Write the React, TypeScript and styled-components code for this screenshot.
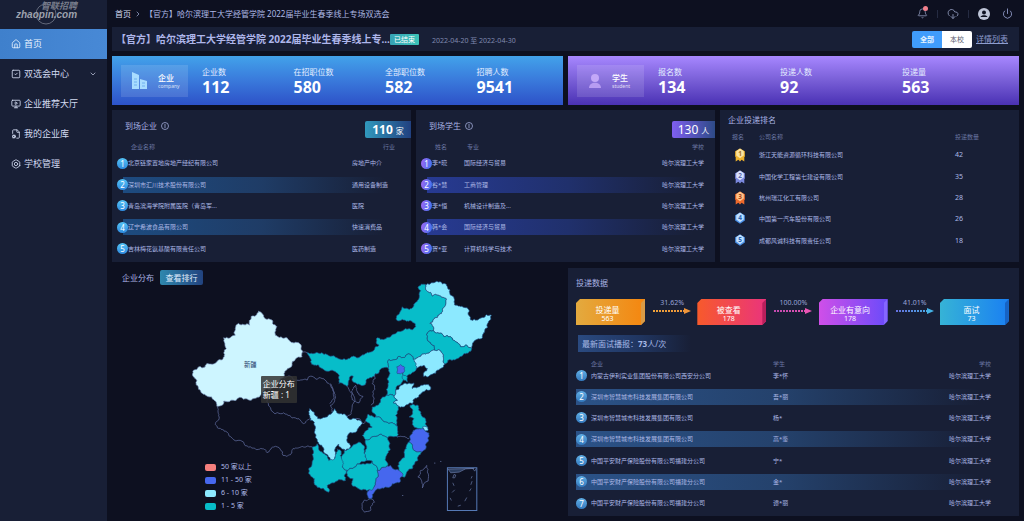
import React from 'react';
import styled, { createGlobalStyle, css } from 'styled-components';
import { Bell, Bolt, ChevronDown, ChevronRight, CloudDownload, Power, House, SquareCheck, MonitorPlay, FileCog } from 'lucide-react';

const color = {
  page: '#0d1020',
  panel: '#181f36',
  text: '#adb9e6',
  muted: '#6a76a2',
  heading: '#a9b3e3',
};

const Global = createGlobalStyle`
  *, *::before, *::after { box-sizing: border-box; }
  body {
    margin: 0;
    background: ${color.page};
    color: ${color.text};
    font-family: "Noto Sans", "Noto Sans CJK SC", sans-serif;
    font-size: 6px;
    line-height: 10px;
  }
  h1, h2, p, ul, dl, dd { margin: 0; padding: 0; }
  ul { list-style: none; }
  button { font-family: inherit; border: 0; cursor: pointer; }
  a { color: inherit; text-decoration: none; }
`;

const Shell = styled.div`
  display: grid;
  grid-template-columns: 107px minmax(0, 1fr);
  min-height: 100vh;
`;

/* ---------- side navigation ---------- */

const Sidebar = styled.aside`
  background: ${color.panel};
`;

const Logo = styled.a`
  display: block;
  height: 29px;
  padding-left: 14px;
  svg { display: block; }
`;

const NavLink = styled.a<{ $active?: boolean }>`
  display: flex;
  align-items: center;
  gap: 3px;
  height: 30px;
  padding: 0 10px 0 11px;
  font-size: 9px;
  line-height: 14px;
  color: ${(p) => (p.$active ? '#eaf4ff' : '#d3dbf1')};
  background: ${(p) => (p.$active ? 'linear-gradient(90deg, #3f80cc, #4889d6)' : 'none')};
  svg { flex: none; }
  svg:nth-of-type(2) { margin-left: auto; }
`;

/* ---------- top of the page ---------- */

const Main = styled.main`
  display: flex;
  flex-direction: column;
  padding: 0 5px;
`;

const TopBar = styled.header`
  display: flex;
  align-items: center;
  justify-content: space-between;
  height: 27px;
  padding: 0 6px 0 3px;
`;

const Crumbs = styled.nav`
  display: flex;
  align-items: center;
  gap: 3px;
  font-size: 8px;
  line-height: 12px;
  a { color: #d6ddf2; }
`;

const Tools = styled.div`
  display: flex;
  align-items: center;
`;

const ToolButton = styled.button`
  position: relative;
  display: flex;
  align-items: center;
  justify-content: center;
  width: 12px;
  height: 16px;
  padding: 0;
  background: none;
  color: #7f88a8;
`;

const RedDot = styled.span`
  position: absolute;
  top: 0;
  right: 0;
  width: 5px;
  height: 5px;
  border-radius: 50%;
  background: #f2808c;
`;

const Divider = styled.span`
  width: 1px;
  height: 8px;
  margin: 0 9px;
  background: #252b42;
`;

const Spacer = styled.span`
  width: 11px;
`;

const TitleBar = styled.section`
  display: flex;
  align-items: center;
  height: 24px;
  padding: 0 11px 0 4px;
  background: ${color.panel};
`;

const PageTitle = styled.h1`
  font-size: 10px;
  line-height: 16px;
  font-weight: 700;
  color: #aeb6ea;
`;

const Status = styled.span`
  padding: 0 4px;
  border-radius: 1px;
  font-size: 7px;
  line-height: 11px;
  color: #fff;
  background: linear-gradient(90deg, #36a3b5, #3cc4b9);
`;

const DateRange = styled.span`
  margin-left: 13px;
  padding-top: 3px;
  font-size: 7px;
  color: #8089ae;
`;

const Segment = styled.div`
  display: flex;
  margin-left: auto;
  border-radius: 2px;
  overflow: hidden;
`;

const SegmentButton = styled.button<{ $on?: boolean }>`
  width: 30px;
  height: 17px;
  padding: 0;
  font-size: 7px;
  line-height: 17px;
  font-weight: ${(p) => (p.$on ? 700 : 400)};
  color: ${(p) => (p.$on ? '#e6f3ff' : '#5b6070')};
  background: ${(p) => (p.$on ? '#409cfb' : '#fff')};
`;

const DetailLink = styled.a`
  margin-left: 4px;
  font-size: 8px;
  line-height: 12px;
  text-decoration: underline;
  color: #8e9dcf;
`;

/* ---------- summary cards ---------- */

const Summary = styled.div`
  display: grid;
  grid-template-columns: 1fr 1fr;
  gap: 5px;
  margin: 5px 0;
`;

const SummaryCard = styled.section<{ $tone: 'blue' | 'violet' }>`
  display: flex;
  align-items: center;
  height: 49px;
  padding-left: 9px;
  background: ${(p) =>
    p.$tone === 'blue'
      ? 'linear-gradient(180deg, #42a2ea 0%, #3a7bdc 48%, #2d52c8 100%)'
      : 'linear-gradient(180deg, #a787ff 0%, #7a60d8 48%, #4a31b4 100%)'};
`;

const Kind = styled.div`
  display: flex;
  align-items: center;
  gap: 8px;
  width: 67px;
  height: 32px;
  padding-left: 9px;
  background: rgba(255, 255, 255, 0.12);
  color: #fff;
  h2 { font-size: 8px; line-height: 10px; font-weight: 500; }
  p { font-size: 5px; line-height: 6px; opacity: 0.75; }
`;

const Figures = styled.dl<{ $count: number }>`
  flex: 1;
  display: grid;
  grid-template-columns: repeat(${(p) => p.$count}, 1fr);
  margin: 2px 0 0 9px;
  color: #fff;
  div { padding-left: 5px; }
  dt { font-size: 8px; line-height: 12px; color: #e4eeff; }
  dd { font-size: 16px; line-height: 19px; font-weight: 700; }
`;

/* ---------- panels and tables ---------- */

const Columns = styled.div`
  display: grid;
  grid-template-columns: repeat(3, 1fr);
  gap: 5px;
  margin-bottom: 6px;
`;

const Panel = styled.section`
  position: relative;
  background: ${color.panel};
`;

const PanelHead = styled.div`
  display: flex;
  align-items: center;
  height: 31px;
  padding-left: 13px;
`;

const PanelTitle = styled.h2`
  display: flex;
  align-items: center;
  gap: 4px;
  font-size: 8px;
  line-height: 12px;
  font-weight: 400;
  color: ${color.heading};
`;

const Tally = styled.div<{ $tone: 'blue' | 'violet' }>`
  display: flex;
  align-items: baseline;
  justify-content: center;
  gap: 3px;
  margin: 7px 0 0 auto;
  height: 17px;
  border-radius: 2px 0 0 2px;
  color: #fff;
  font-size: 8px;
  line-height: 17px;
  ${(p) =>
    p.$tone === 'blue'
      ? css`
          width: 46px;
          background: linear-gradient(90deg, #3199bd, #21407f);
        `
      : css`
          width: 43px;
          background: linear-gradient(90deg, #7f5ff0, #2d4a86);
        `}
  strong { font-size: 12px; font-weight: ${(p) => (p.$tone === 'blue' ? 700 : 400)}; }
`;

const Clip = styled.div`
  height: 121px;
  overflow: hidden;
`;

type Tone = 'blue' | 'violet' | 'sky' | 'plain';

const stripe: Record<Tone, string> = {
  blue: 'linear-gradient(90deg, #1d4b80, #1f3c66 50%, #181f36 94%)',
  violet: 'linear-gradient(90deg, #273a92, #20306c 50%, #181f36 94%)',
  sky: 'linear-gradient(90deg, #2b5287, #24416b 50%, #181f36 97%)',
  plain: 'none',
};

const Grid = styled.table<{ $tone: Tone; $inset?: number }>`
  width: 100%;
  table-layout: fixed;
  border-collapse: collapse;
  th, td { padding: 0; text-align: left; font-weight: 400; white-space: nowrap; }
  th { color: ${color.muted}; }
  thead tr { height: 11px; }
  tbody tr { height: 21px; }
  tbody tr:nth-child(3n + 1) { height: 22px; }
  tbody tr:nth-child(even) {
    background: ${(p) => stripe[p.$tone]} ${(p) => p.$inset ?? 0}px center / 100% 16px no-repeat;
  }
`;

const Col = styled.col<{ $w?: number }>`
  ${(p) => p.$w && `width: ${p.$w}px;`}
`;

const RightTh = styled.th`
  && { text-align: right; }
`;

const RightTd = styled.td`
  && { text-align: right; }
`;

const IndentTh = styled.th`
  && { padding-left: 3px; }
`;

const Rank = styled.span<{ $tone: Tone }>`
  display: block;
  width: 11px;
  height: 11px;
  border-radius: 50%;
  text-align: center;
  font-size: 8px;
  line-height: 11px;
  color: #fff;
  background: ${(p) =>
    p.$tone === 'violet'
      ? 'linear-gradient(100deg, #a066f2, #3d74f0)'
      : p.$tone === 'blue'
        ? 'linear-gradient(180deg, #55c4f6, #2f8be0)'
        : 'linear-gradient(180deg, #62b0e6, #3378bd)'};
`;

const TableArea = styled.div<{ $left: number; $right: number }>`
  padding: 0 ${(p) => p.$right}px 0 ${(p) => p.$left}px;
`;

const RankingHead = styled.div`
  height: 20px;
  padding: 4px 0 0 8px;
`;

const RankingGrid = styled(Grid)`
  thead tr { height: 14px; }
  td:last-child { font-size: 7px; }
  td svg { display: block; margin-left: 2px; }
`;

const InterviewGrid = styled(Grid)`
  thead tr { height: 10px; }
  tbody tr:first-child { height: 17px; }
  tbody tr:first-child td { padding-bottom: 4px; }
`;

/* ---------- map ---------- */

const Lower = styled.div`
  display: grid;
  grid-template-columns: minmax(0, 1fr) minmax(0, 1fr);
  gap: 5px;
`;

const MapPanel = styled.section`
  position: relative;
  display: grid;
  > * { grid-area: 1 / 1; }
`;

const MapHead = styled.div`
  display: flex;
  align-items: center;
  align-self: start;
  gap: 6px;
  padding: 2px 0 0 10px;
`;

const RankButton = styled.button`
  width: 43px;
  height: 15px;
  padding: 0;
  border-radius: 2px;
  font-size: 8px;
  line-height: 15px;
  color: #e2efff;
  background: linear-gradient(90deg, #2f88ae, #22437f);
`;

const MapDrawing = styled.svg`
  width: 100%;
  height: 100%;
`;

const Legend = styled.ul`
  align-self: end;
  justify-self: start;
  padding: 0 0 3px 93px;
  li { display: flex; align-items: center; gap: 5px; height: 13px; font-size: 7px; }
`;

const Swatch = styled.span<{ $fill: string }>`
  width: 11px;
  height: 7px;
  border-radius: 2px;
  background: ${(p) => p.$fill};
`;

const Tooltip = styled.div`
  position: absolute;
  left: 33%;
  top: 108px;
  padding: 2px 2px 3px;
  border-radius: 1px;
  font-size: 8px;
  line-height: 11px;
  color: #fff;
  background: rgba(50, 50, 50, 0.85);
  white-space: nowrap;
`;

/* ---------- delivery funnel ---------- */

const DeliveryPanel = styled(Panel)`
  padding: 9px 9px 0 8px;
`;

const Funnel = styled.div`
  display: flex;
  justify-content: space-between;
  margin-top: 10px;
  padding-right: 1px;
`;

const Stage = styled.div<{ $from: string; $to: string; $side: string }>`
  position: relative;
  width: 69px;
  height: 26px;
  padding: 5px 6px 0 0;
  text-align: center;
  color: #fff;
  font-size: 8px;
  line-height: 11px;
  clip-path: polygon(4px 0, 100% 0, 100% 22px, 65px 100%, 0 100%, 0 4px);
  background: linear-gradient(90deg, ${(p) => p.$from}, ${(p) => p.$to});
  p + p { font-size: 7px; line-height: 7px; }
  &::after {
    content: '';
    position: absolute;
    inset: 0 0 0 auto;
    width: 4px;
    background: ${(p) => p.$side};
    clip-path: polygon(0 4px, 100% 0, 100% 100%, 0 100%);
  }
`;

const Step = styled.div`
  width: 40px;
  padding-left: 2px;
  text-align: center;
  font-size: 7px;
  line-height: 8px;
  color: #98a3d6;
  svg { display: block; }
`;

const Broadcast = styled.p`
  width: 113px;
  height: 17px;
  margin: 10px 0 7px 2px;
  padding-left: 4px;
  font-size: 8px;
  line-height: 17px;
  color: #a6b8e6;
  background: linear-gradient(90deg, #2a4a80, #203560 55%, #181f36);
`;

const NextRow = styled.div`
  flex: 1;
  display: grid;
  grid-template-columns: 2fr 1fr;
  gap: 5px;
  margin-top: 5px;
`;

/* ---------- data ---------- */

const companies = [
  ['北京链家置地房地产经纪有限公司', '房地产中介'],
  ['深圳市汇川技术股份有限公司', '通用设备制造'],
  ['青岛滨海学院附属医院（青岛军...', '医院'],
  ['辽宁希波食品有限公司', '快速消费品'],
  ['吉林梅花氨基酸有限责任公司', '医药制造'],
];

const students = [
  ['李*晓', '国际经济与贸易'],
  ['谷*慧', '工商管理'],
  ['李*恒', '机械设计制造及...'],
  ['韩*会', '国际经济与贸易'],
  ['贺*亚', '计算机科学与技术'],
];

const ranking: [string, number][] = [
  ['浙江天能资源循环科技有限公司', 42],
  ['中国化学工程第七建设有限公司', 35],
  ['杭州瑞江化工有限公司', 28],
  ['中国第一汽车股份有限公司', 26],
  ['成都风诚科技有限责任公司', 18],
];

const interviews = [
  ['内蒙古伊利实业集团股份有限公司西安分公司', '李*怀'],
  ['深圳市智慧城市科技发展集团有限公司', '吾*丽'],
  ['深圳市智慧城市科技发展集团有限公司', '杨*'],
  ['深圳市智慧城市科技发展集团有限公司', '高*鉴'],
  ['中国平安财产保险股份有限公司福建分公司', '宁*'],
  ['中国平安财产保险股份有限公司福建分公司', '金*'],
  ['中国平安财产保险股份有限公司福建分公司', '谭*丽'],
];

const school = '哈尔滨理工大学';

const medals = [
  ['#fbe3a0', '#eeb32e', '#a8741a'],
  ['#d9e2fb', '#7b88dd', '#5a68a8'],
  ['#ffc48a', '#ee6a2c', '#a84418'],
  ['#bfe0ff', '#4a90e8', '#2a62b0'],
  ['#bfe0ff', '#4a90e8', '#2a62b0'],
];

function Medal({ place }: { place: number }) {
  const [light, dark, ink] = medals[place - 1];
  return (
    <svg width="12" height="14" viewBox="0 0 22 26" role="img" aria-label={`第${place}名`}>
      {place < 4 && <path d="M3 12 L3 25 L8 22 L11 25 L14 22 L19 25 L19 12 Z" fill={dark} />}
      <path d="M11 1 L20 6 L20 16 L11 22 L2 16 L2 6 Z" fill={dark} />
      <path d="M11 1 L18 6 L18 14 L11 19 L4 14 L4 6 Z" fill={light} />
      <text x="11" y="15" fontSize="12" fontWeight="700" textAnchor="middle" fill={ink}>{place}</text>
    </svg>
  );
}

/* ---------- map geometry ---------- */

type Pt = [number, number];

const parse = (s: string): Pt[] => s.trim().split(/\s+/).map((p) => p.split(',').map(Number) as Pt);

// Splits an edge with a repeatable wobble, so that two provinces share the same border.
function wobble(a: Pt, b: Pt, depth: number): Pt[] {
  const len = Math.hypot(b[0] - a[0], b[1] - a[1]);
  if (depth === 0 || len < 5) return [a];
  const flip = a[0] > b[0] || (a[0] === b[0] && a[1] > b[1]);
  const [p, q] = flip ? [b, a] : [a, b];
  const n = Math.sin(p[0] * 12.9 + p[1] * 78.2 + q[0] * 37.7 + q[1] * 4.6) * 43758.5;
  const k = (n - Math.floor(n) - 0.5) * 0.45;
  const mid: Pt = [(p[0] + q[0]) / 2 - (q[1] - p[1]) * k, (p[1] + q[1]) / 2 + (q[0] - p[0]) * k];
  return [...wobble(a, mid, depth - 1), ...wobble(mid, b, depth - 1)];
}

function outline(s: string, closed = true) {
  const pts = parse(s);
  const out: Pt[] = [];
  const last = closed ? pts.length : pts.length - 1;
  for (let i = 0; i < last; i++) out.push(...wobble(pts[i], pts[(i + 1) % pts.length], 3));
  if (!closed) out.push(pts[pts.length - 1]);
  return 'M' + out.map((p) => `${p[0].toFixed(1)} ${p[1].toFixed(1)}`).join('L') + (closed ? 'Z' : '');
}

const teal = '#07bdc9';
const ice = '#8ce9ff';
const blue = '#4667ee';

const provinces: [string, string][] = [
  [teal, '-70,247 -50,250 -20,252 0,258 40,266 60,262 85,262 105,250 130,240 145,225 137,215 140,203 160,208 180,200 200,185 225,175 255,170 253,160 240,152 215,148 198,150 200,135 210,122 215,110 232,116 250,108 262,90 265,72 270,62 262,52 272,42 285,44 288,62 305,78 330,78 346,85 345,105 335,125 320,142 298,160 308,180 298,182 287,192 290,208 300,218 312,240 285,252 262,262 248,268 240,253 222,262 205,258 175,268 172,293 150,297 135,310 118,322 100,345 80,342 68,335 68,318 60,318 55,330 50,348 25,340 22,310 5,300 -10,303 -25,295 -35,285 -60,275'],
  [ice, '285,44 310,38 345,42 358,60 370,85 372,105 400,112 415,120 420,150 440,150 455,142 482,136 472,158 462,180 455,203 438,208 425,222 423,235 408,225 390,230 375,215 360,200 340,200 325,190 308,180 298,160 320,142 335,125 345,105 346,85 330,78 305,78 288,62'],
  [teal, '298,182 308,180 325,190 340,200 360,200 375,215 390,230 408,225 423,235 420,243 400,250 385,262 365,270 342,282 338,262 325,238 312,240 300,218 290,208 287,192'],
  [ice, '248,268 262,262 285,252 312,240 325,238 338,262 342,282 320,300 290,320 278,318 290,295 280,285 265,290 255,295'],
  [teal, '175,268 205,258 222,262 240,253 248,268 258,292 250,305 235,312 228,320 215,335 205,345 195,360 190,378 168,375 172,340 178,310 172,293'],
  [teal, '215,308 228,318 230,335 218,328'],
  [blue, '198,290 210,283 222,292 218,308 200,310'],
  [ice, '190,378 195,360 210,345 235,338 250,338 245,355 262,350 275,345 298,348 300,357 275,365 260,382 245,400 225,405 205,408 188,398 200,390'],
  [teal, '168,375 190,378 200,390 188,398 205,408 195,435 200,468 165,455 135,440 125,410 150,392'],
  [teal, '112,432 135,440 165,455 200,468 200,500 172,502 130,498 105,508 95,495 108,480 125,470 105,450'],
  [teal, '238,405 262,405 270,430 285,450 290,470 265,475 245,462 250,445 235,440 245,425'],
  [ice, '275,470 290,470 292,480 280,482'],
  [blue, '245,485 265,475 282,480 295,488 290,515 272,545 250,540 235,515'],
  [teal, '222,540 235,515 250,540 272,545 262,570 245,595 222,620 205,600 205,575'],
  [blue, '160,590 180,585 205,600 217,612 210,632 185,640 150,655 125,672 122,686 112,680 115,660 130,650 143,618 140,600'],
  [teal, '50,600 80,580 125,572 140,600 143,618 130,650 110,660 85,655 65,645 68,625 50,615'],
  [teal, '105,508 130,498 172,502 178,520 170,550 172,585 160,590 140,600 125,572 108,570 108,535'],
  [teal, '35,555 55,535 85,515 100,525 108,570 80,580 50,600 35,590 30,565'],
  [teal, '-55,530 -40,520 -25,545 -5,570 12,565 20,535 30,540 35,570 35,590 50,600 45,630 20,632 0,640 -10,645 -5,665 -20,655 -40,650 -48,625 -65,610 -55,580 -52,560'],
  [ice, '-63,415 -50,425 -38,445 -10,440 5,428 12,415 30,430 50,440 75,445 95,460 80,480 55,490 50,515 60,525 45,540 25,522 15,545 12,565 0,568 -15,550 -35,520 -45,500 -45,470 -60,450'],
];

const eastBorders = [
  '133,308 125,340 127,375 122,405',
  '75,345 80,365 97,378 85,398 65,388 65,370 75,345',
  '50,348 60,365 68,400 62,430 50,440',
  '0,340 12,365 10,385 -2,400',
  '75,445 100,460 105,450',
  '200,500 220,498 235,505',
  '100,690 120,685 132,695 120,720 102,725 95,708 100,690',
  '270,600 288,585 290,605 275,652 262,620 270,600',
];

const westBorders = [
  '322,425 327,455 318,470 322,488 350,500 390,525 425,548 455,550 470,562 490,545 518,570 540,568 555,548 580,545 605,545',
  '480,380 482,435 510,445 545,458 580,475 598,460',
  '520,340 560,345 590,345 600,333 635,340 665,365 675,395 660,420 665,440',
  '577,260 590,262',
];

const xinjiang = '445,138 460,155 485,165 500,185 495,210 530,218 560,232 577,260 575,275 545,300 528,315 522,335 490,365 455,385 430,400 400,402 370,405 340,408 335,420 320,423 312,405 290,392 265,372 260,345 247,330 250,315 285,305 290,295 320,290 342,275 348,250 340,218 375,210 375,190 385,175 418,180 422,155';

function ChinaMap() {
  return (
    <MapDrawing viewBox="6 9 1350 741" role="img" aria-label="企业分布地图">
      <g fill="none" stroke="#6673aa" strokeWidth="2">
        {westBorders.map((b) => <path key={b} d={outline(b, false)} />)}
      </g>
      <path d={outline(xinjiang)} fill="#cdf5ff" stroke="#7a95bd" strokeWidth="2" />
      <text x="420" y="304" fontSize="19" textAnchor="middle" fill="#24406a">新疆</text>
      <g transform="translate(660 15)">
        <g fill="none" stroke="#6673aa" strokeWidth="2">
          {eastBorders.map((b) => <path key={b} d={outline(b, false)} />)}
        </g>
        <g stroke="#1f4f86" strokeWidth="2">
          {provinces.map(([fill, pts]) => <path key={pts} d={outline(pts)} fill={fill} />)}
        </g>
        <g fill="none" stroke="#6a7cab" strokeWidth="2">
          <path d="M350 592 H438 V720 H350 Z" stroke="#5579b5" strokeWidth="3" />
          <path d="M352 596 L360 607 L385 605 L405 595 L430 594 Z" fill="#2b3d5e" />
          <path d="M425 594 L432 602 L436 594 M366 622 L370 612 L375 614 L372 622 Z M366 637 L370 646 M372 658 L364 666 M358 682 L362 690 M381 707 L390 704 M402 692 L408 681 M416 662 L421 654 M420 643 L424 632 M421 624 L424 617" />
          <path d="M310 578 h4 M328 573 h4 M214 675 h4" />
        </g>
      </g>
    </MapDrawing>
  );
}

function Arrow({ id, from, to }: { id: string; from: string; to: string }) {
  return (
    <svg width="38" height="8" viewBox="0 0 38 8" aria-hidden="true">
      <defs>
        <linearGradient id={id} gradientUnits="userSpaceOnUse" x1="0" x2="38" y1="0" y2="0">
          <stop offset="0" stopColor={from} />
          <stop offset="1" stopColor={to} />
        </linearGradient>
      </defs>
      <path d="M0 4 H31" stroke={`url(#${id})`} strokeWidth="2" strokeDasharray="2 1" fill="none" />
      <path d="M31 1 L38 4 L31 7 Z" fill={to} />
    </svg>
  );
}

function InfoMark() {
  return (
    <svg width="8" height="8" viewBox="0 0 16 16" fill="none" stroke="#a9b3e3" strokeWidth="1.5" aria-hidden="true">
      <circle cx="8" cy="8" r="7" />
      <path d="M8 4 V12" />
    </svg>
  );
}

const navigation = [
  { label: '首页', Icon: House, active: true },
  { label: '双选会中心', Icon: SquareCheck, nested: true },
  { label: '企业推荐大厅', Icon: MonitorPlay },
  { label: '我的企业库', Icon: FileCog },
  { label: '学校管理', Icon: Bolt },
];

const companyFigures = [['企业数', '112'], ['在招职位数', '580'], ['全部职位数', '582'], ['招聘人数', '9541']];
const studentFigures = [['报名数', '134'], ['投递人数', '92'], ['投递量', '563']];

function FigureList({ items }: { items: string[][] }) {
  return (
    <Figures $count={items.length}>
      {items.map(([label, value]) => (
        <div key={label}>
          <dt>{label}</dt>
          <dd>{value}</dd>
        </div>
      ))}
    </Figures>
  );
}

export default function App() {
  return (
    <>
      <Global />
      <Shell>
        <Sidebar>
          <Logo href="#" aria-label="智联招聘">
            <svg width="70" height="29" viewBox="0 0 70 29">
              <circle cx="32" cy="14" r="10" fill="none" stroke="#62687a" strokeWidth="1" />
              <text x="27" y="9" fontSize="9" fontWeight="700" fontStyle="italic" fill="#767b8a">智联招聘</text>
              <text x="2" y="18" fontSize="10" fontWeight="700" fontStyle="italic" fontFamily="Liberation Sans, sans-serif" fill="#9da1ad">zhaopin.com</text>
            </svg>
          </Logo>
          <nav>
            {navigation.map(({ label, Icon, active, nested }) => (
              <NavLink key={label} href="#" $active={active}>
                <Icon size={10} strokeWidth={2} />
                {label}
                {nested && <ChevronDown size={8} />}
              </NavLink>
            ))}
          </nav>
        </Sidebar>

        <Main>
          <TopBar>
            <Crumbs aria-label="位置">
              <a href="#">首页</a>
              <ChevronRight size={8} />
              <span>【官方】哈尔滨理工大学经管学院 2022届毕业生春季线上专场双选会</span>
            </Crumbs>
            <Tools>
              <ToolButton aria-label="通知"><Bell size={11} /><RedDot /></ToolButton>
              <Divider />
              <ToolButton aria-label="下载"><CloudDownload size={12} /></ToolButton>
              <Divider />
              <ToolButton aria-label="账户">
                <svg width="12" height="12" viewBox="0 0 24 24">
                  <circle cx="12" cy="12" r="12" fill="#bfc6d8" />
                  <circle cx="12" cy="9" r="4" fill="#0d1020" />
                  <path d="M5 18 C6 13 18 13 19 18 Z" fill="#0d1020" />
                </svg>
              </ToolButton>
              <Spacer />
              <ToolButton aria-label="退出"><Power size={11} color="#8d97c4" /></ToolButton>
            </Tools>
          </TopBar>

          <TitleBar>
            <PageTitle>【官方】哈尔滨理工大学经管学院 2022届毕业生春季线上专...</PageTitle>
            <Status>已结束</Status>
            <DateRange>2022-04-20 至 2022-04-30</DateRange>
            <Segment>
              <SegmentButton $on>全部</SegmentButton>
              <SegmentButton>本校</SegmentButton>
            </Segment>
            <DetailLink href="#">详情列表</DetailLink>
          </TitleBar>

          <Summary>
            <SummaryCard $tone="blue">
              <Kind>
                <svg width="20" height="20" viewBox="0 0 20 20" aria-hidden="true">
                  <path d="M2 1 L9 4 V18 H2 Z" fill="#a9dcff" />
                  <path d="M10 8 L17 10 V18 H10 Z" fill="#a9dcff" />
                  <path d="M4 8 h3 M4 11 h3 M4 14 h3 M12 12 h3 M12 15 h3" stroke="#6fb0ee" />
                </svg>
                <div><h2>企业</h2><p>company</p></div>
              </Kind>
              <FigureList items={companyFigures} />
            </SummaryCard>
            <SummaryCard $tone="violet">
              <Kind>
                <svg width="18" height="20" viewBox="0 0 18 20" aria-hidden="true">
                  <circle cx="9" cy="7" r="4" fill="#c3a8f8" />
                  <path d="M3 17 C3 10 15 10 15 17 Z" fill="#b79cf2" />
                </svg>
                <div><h2>学生</h2><p>student</p></div>
              </Kind>
              <FigureList items={studentFigures} />
            </SummaryCard>
          </Summary>

          <Columns>
            <Panel>
              <PanelHead>
                <PanelTitle>到场企业 <InfoMark /></PanelTitle>
                <Tally $tone="blue"><strong>110</strong>家</Tally>
              </PanelHead>
              <Clip>
                <TableArea $left={5} $right={16}>
                  <Grid $tone="blue" $inset={6}>
                    <colgroup><Col $w={11} /><Col /><Col $w={43} /></colgroup>
                    <thead><tr><th /><IndentTh>企业名称</IndentTh><RightTh>行业</RightTh></tr></thead>
                    <tbody>
                      {companies.map(([name, trade], i) => (
                        <tr key={name}><td><Rank $tone="blue">{i + 1}</Rank></td><td>{name}</td><td>{trade}</td></tr>
                      ))}
                      <tr><td colSpan={3} /></tr>
                    </tbody>
                  </Grid>
                </TableArea>
              </Clip>
            </Panel>

            <Panel>
              <PanelHead>
                <PanelTitle>到场学生 <InfoMark /></PanelTitle>
                <Tally $tone="violet"><strong>130</strong>人</Tally>
              </PanelHead>
              <Clip>
                <TableArea $left={5} $right={11}>
                  <Grid $tone="violet" $inset={6}>
                    <colgroup><Col $w={11} /><Col $w={32} /><Col /><Col $w={60} /></colgroup>
                    <thead><tr><th /><IndentTh>姓名</IndentTh><IndentTh>专业</IndentTh><RightTh>学校</RightTh></tr></thead>
                    <tbody>
                      {students.map(([name, major], i) => (
                        <tr key={name}><td><Rank $tone="violet">{i + 1}</Rank></td><td>{name}</td><td>{major}</td><RightTd>{school}</RightTd></tr>
                      ))}
                      <tr><td colSpan={4} /></tr>
                    </tbody>
                  </Grid>
                </TableArea>
              </Clip>
            </Panel>

            <Panel>
              <RankingHead><PanelTitle>企业投递排名</PanelTitle></RankingHead>
              <TableArea $left={12} $right={10}>
                <RankingGrid $tone="plain">
                  <colgroup><Col $w={27} /><Col /><Col $w={54} /></colgroup>
                  <thead><tr><th>报名</th><th>公司名称</th><th>投递数量</th></tr></thead>
                  <tbody>
                    {ranking.map(([name, count], i) => (
                      <tr key={name}><td><Medal place={i + 1} /></td><td>{name}</td><td>{count}</td></tr>
                    ))}
                  </tbody>
                </RankingGrid>
              </TableArea>
            </Panel>
          </Columns>

          <Lower>
            <MapPanel>
              <ChinaMap />
              <MapHead>
                <PanelTitle>企业分布</PanelTitle>
                <RankButton>查看排行</RankButton>
              </MapHead>
              <Legend>
                <li><Swatch $fill="#f47f7d" />50 家以上</li>
                <li><Swatch $fill={blue} />11 - 50 家</li>
                <li><Swatch $fill={ice} />6 - 10 家</li>
                <li><Swatch $fill={teal} />1 - 5 家</li>
              </Legend>
              <Tooltip>企业分布<br />新疆 : 1</Tooltip>
            </MapPanel>

            <DeliveryPanel>
              <PanelTitle>投递数据</PanelTitle>
              <Funnel>
                <Stage $from="#e3aa3f" $to="#f5860f" $side="#d99a45"><p>投递量</p><p>563</p></Stage>
                <Step>31.62%<Arrow id="step-viewed" from="#f0a23a" to="#f0953a" /></Step>
                <Stage $from="#f75a2b" $to="#ea347c" $side="#b81f5c"><p>被查看</p><p>178</p></Stage>
                <Step>100.00%<Arrow id="step-wanted" from="#c04ab0" to="#ea55b4" /></Step>
                <Stage $from="#cf4fe8" $to="#6a4bfa" $side="#8566ff"><p>企业有意向</p><p>178</p></Stage>
                <Step>41.01%<Arrow id="step-interview" from="#6670e0" to="#45b4e8" /></Step>
                <Stage $from="#36b3d6" $to="#1a80f2" $side="#1763c4"><p>面试</p><p>73</p></Stage>
              </Funnel>
              <Broadcast>最新面试播报：<strong>73</strong>人/次</Broadcast>
              <TableArea $left={0} $right={19}>
                <InterviewGrid $tone="sky">
                  <colgroup><Col $w={15} /><Col /><Col $w={158} /><Col $w={60} /></colgroup>
                  <thead><tr><th /><th>企业</th><th>学生</th><RightTh>学校</RightTh></tr></thead>
                  <tbody>
                    {interviews.map(([name, student], i) => (
                      <tr key={i}><td><Rank $tone="sky">{i + 1}</Rank></td><td>{name}</td><td>{student}</td><RightTd>{school}</RightTd></tr>
                    ))}
                  </tbody>
                </InterviewGrid>
              </TableArea>
            </DeliveryPanel>
          </Lower>

          <NextRow><Panel /><Panel /></NextRow>
        </Main>
      </Shell>
    </>
  );
}
